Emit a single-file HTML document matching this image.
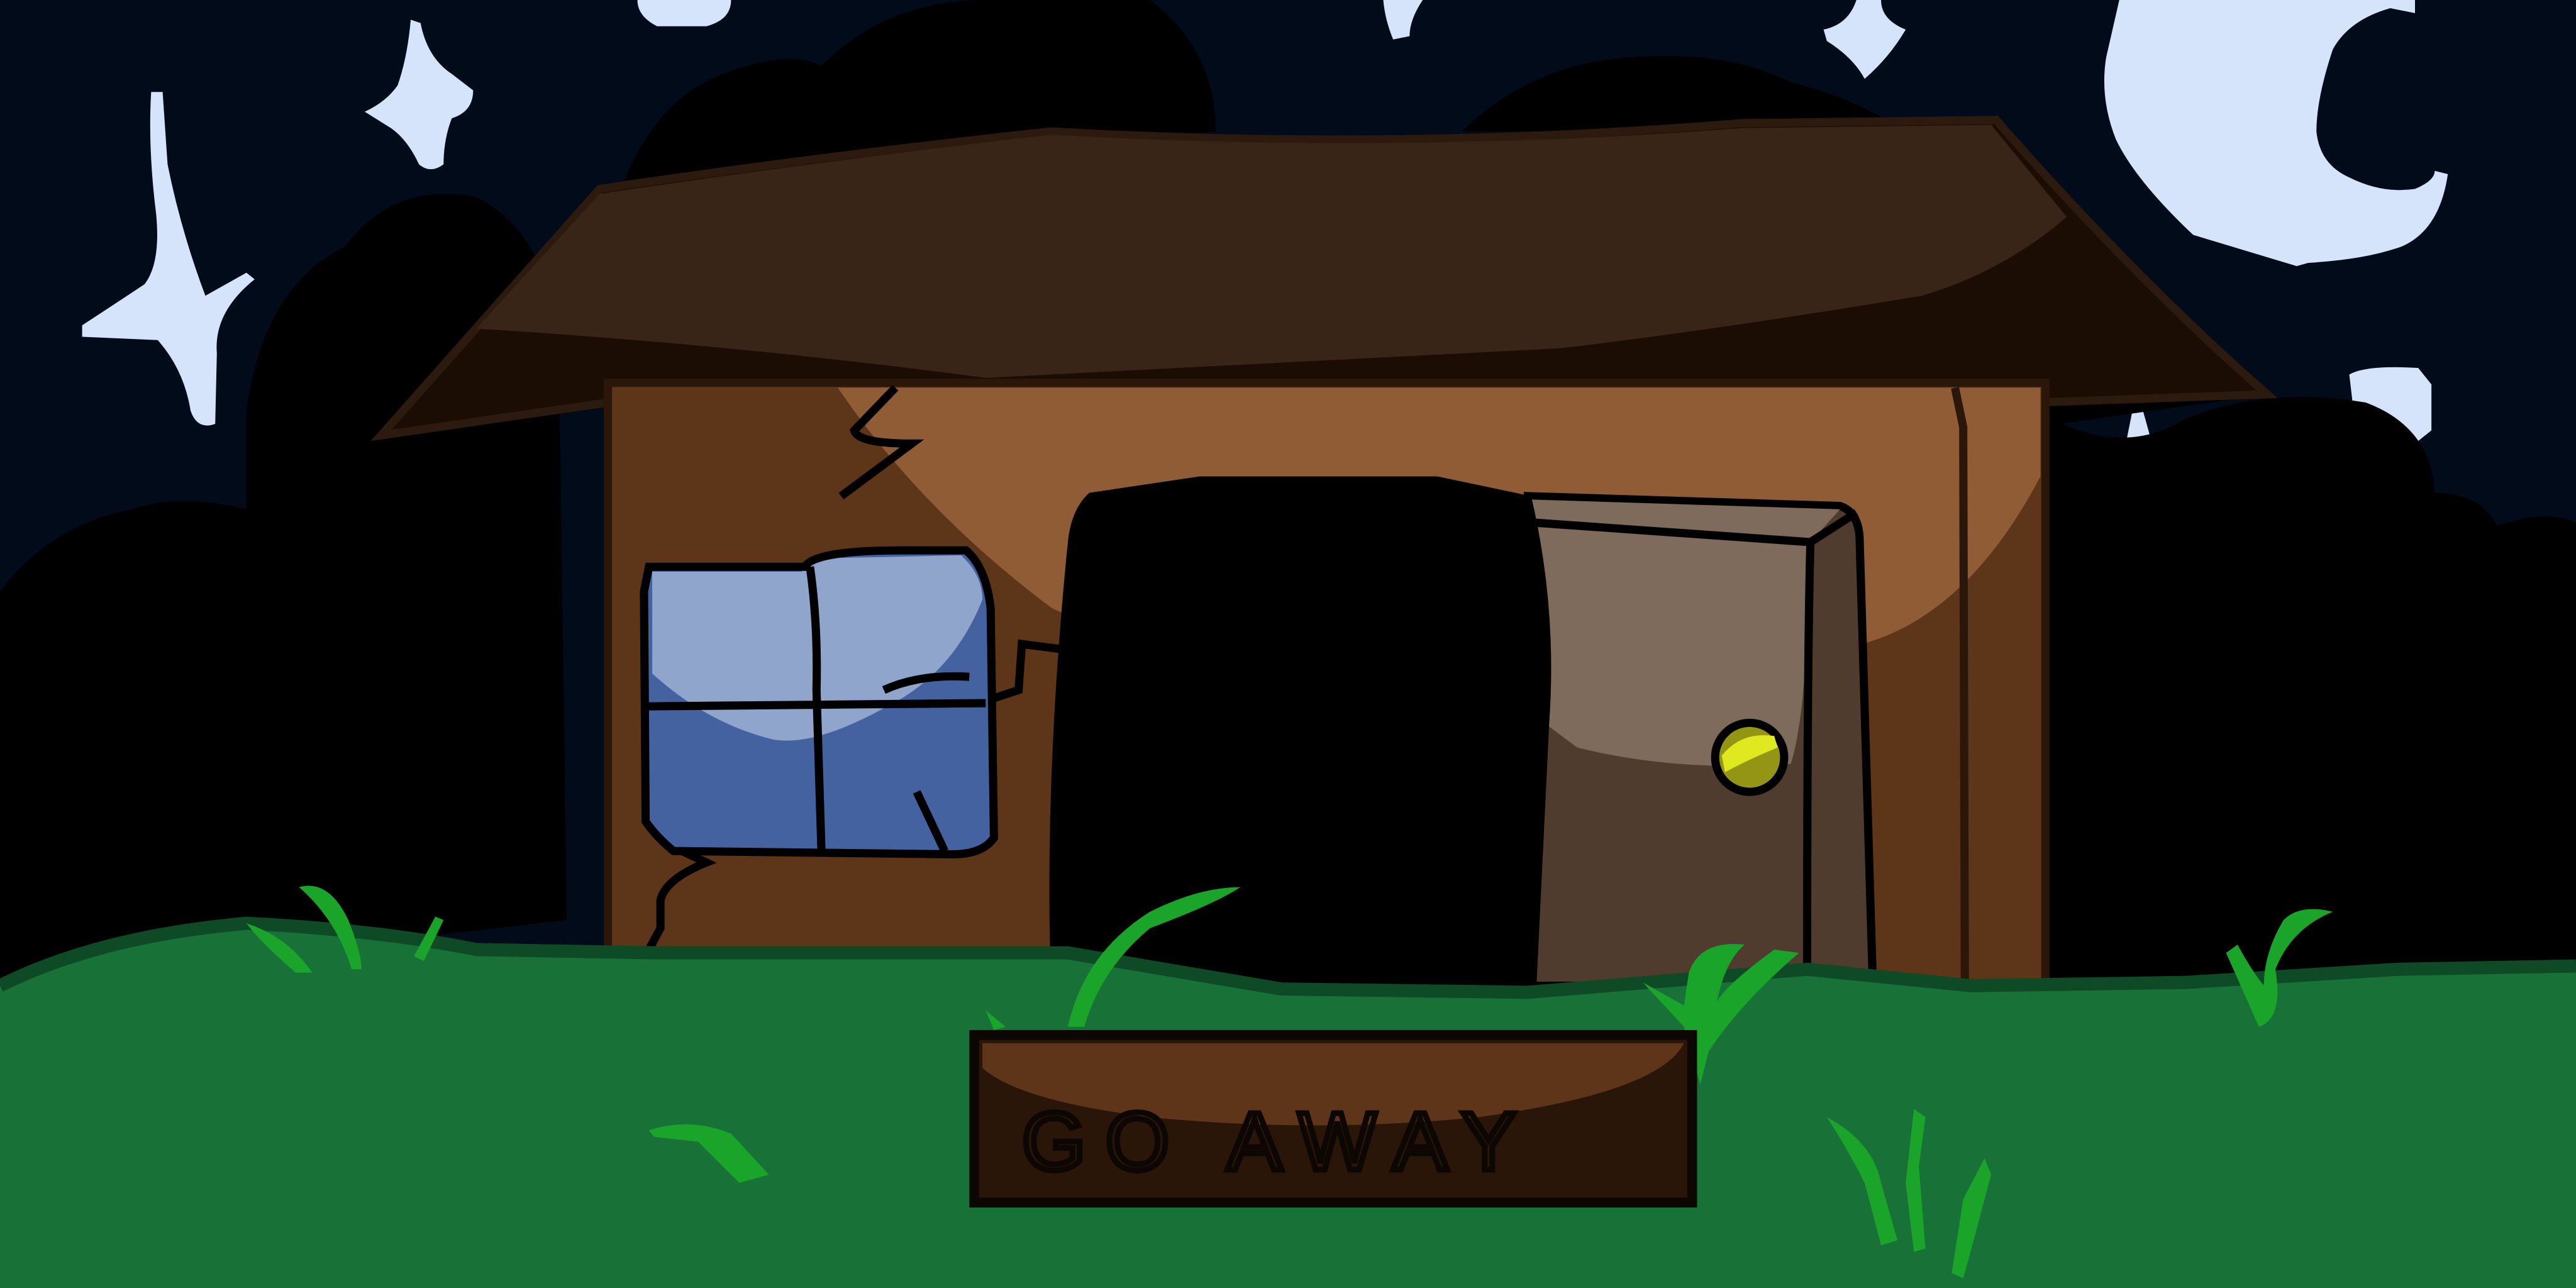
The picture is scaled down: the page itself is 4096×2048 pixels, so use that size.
<!DOCTYPE html>
<html><head><meta charset="utf-8"><style>
html,body{margin:0;padding:0;background:#010b19;overflow:hidden}
svg{display:block}
</style></head><body>
<svg width="4096" height="2048" viewBox="0 0 1568 784" xmlns="http://www.w3.org/2000/svg">
<rect width="1568" height="784" fill="#010b19"/>
<g fill="#d5e3fb">
<path d="M92 56 L99 56 L102 100 Q110 140 125 180 L150 166 L155 170 Q130 190 132 215 L131 258 Q120 262 116 250 Q112 225 96 207 L50 205 L50 198 Q70 185 88 173 Q98 160 95 130 Q90 90 92 56Z"/>
<path d="M250 12 L256 14 Q260 35 275 45 L288 55 Q288 68 275 72 Q270 85 270 100 Q262 106 255 100 Q248 85 238 78 L222 68 Q235 62 242 52 Q248 35 250 12Z"/>
<path d="M1130 0 L1145 0 Q1145 12 1160 18 Q1150 35 1135 48 Q1128 35 1112 25 L1110 18 Q1125 15 1130 0Z"/>
<path d="M842 0 L866 0 Q858 12 858 22 L848 24 Q843 12 842 0Z"/>
<path d="M388 0 L445 0 Q445 12 430 16 L400 16 Q388 10 388 0Z"/>
<path d="M1290 0 L1470 0 L1470 8 L1455 5 Q1430 12 1420 30 Q1410 60 1410 80 Q1412 100 1430 108 Q1450 118 1470 115 Q1482 110 1482 104 L1490 106 Q1485 140 1462 150 Q1440 158 1405 160 L1398 162 L1335 143 Q1300 110 1288 85 Q1278 60 1282 35 Z"/>
<path d="M1430 228 Q1440 222 1472 224 L1480 234 L1480 262 L1470 270 Q1455 255 1432 245 Z"/>
<path d="M1298 250 L1303 245 L1310 270 L1298 285 L1292 280 Z"/>
</g>
<g fill="#000000">
<path d="M0 360 Q30 320 80 310 Q110 300 150 310 L150 250 Q160 175 210 150 Q240 110 290 120 Q330 140 340 200 L345 560 L0 600 Z"/>
<path d="M380 110 Q400 60 440 45 Q480 30 500 40 Q540 0 600 0 L700 0 Q740 30 740 80 L380 110Z"/>
<path d="M890 80 Q930 40 990 35 Q1050 30 1090 50 Q1130 60 1160 80 Z"/>
<path d="M1240 250 Q1290 280 1330 255 Q1380 235 1440 245 Q1480 260 1482 300 Q1510 300 1520 320 Q1550 310 1568 318 L1568 600 L1240 600 Z"/>
<path d="M1240 200 Q1300 150 1380 240 L1240 260 Z"/>
</g>
<path d="M232 265 L365 115 Q500 95 640 80 Q850 92 1060 75 L1215 73 Q1300 170 1380 240 L1240 245 L370 245 Z" fill="#1c0d04" stroke="#2b1a0d" stroke-width="5"/>
<path d="M290 200 L365 118 Q500 98 640 82 Q850 94 1060 78 L1212 76 L1258 132 Q1220 165 1170 180 Q1050 200 950 212 L600 230 Q450 210 290 200Z" fill="#382518"/>
<rect x="370" y="233" width="875" height="370" fill="#5d3519" stroke="#2b170a" stroke-width="5"/>
<path d="M510 236 L1242 236 L1242 290 Q1200 370 1140 390 Q1050 420 900 400 Q700 400 640 370 Q560 310 510 236Z" fill="#8f5c36"/>
<path d="M1190 236 L1195 260 L1196 600" stroke="#2b170a" stroke-width="5" fill="none"/>
<path d="M545 236 L520 262 Q522 270 555 270 L512 302" stroke="#000" stroke-width="5" fill="none"/>
<path d="M395 345 L490 345 Q495 335 550 335 L588 335 Q600 345 603 370 L605 510 Q598 520 580 520 L410 518 Q400 510 393 500 L392 360 Z" fill="#4462a0"/>
<path d="M397 348 L488 348 L495 340 L585 338 Q598 350 598 365 Q580 410 540 430 Q495 455 470 450 Q430 440 397 410 Z" fill="#8fa5cc"/>
<path d="M395 345 L490 345 Q495 335 550 335 L588 335 Q600 345 603 370 L605 510 Q598 520 580 520 L410 518 Q400 510 393 500 L392 360 Z M390 430 L600 428 M493 345 Q498 380 497 420 L500 518 M605 425 L620 420 L622 392 L645 395 M538 420 Q560 410 590 412 M558 482 L575 518" stroke="#000" stroke-width="5" fill="none"/>
<path d="M415 518 L430 525 Q405 535 402 548 L402 565 L395 578" stroke="#000" stroke-width="5" fill="none"/>
<path d="M930 302 L1120 308 Q1132 312 1132 330 L1140 600 L930 600 Z" fill="#4f3c2f" stroke="#000" stroke-width="5"/>
<path d="M930 304 L1120 310 L1102 330 L1100 380 Q1098 440 1090 465 Q1020 470 960 455 L940 440 Z" fill="#7e6b5b"/>
<path d="M932 318 L1102 330 L1130 312 M1102 330 Q1100 400 1100 590" stroke="#000" stroke-width="5" fill="none"/>
<circle cx="1065" cy="461" r="21" fill="#949415" stroke="#000" stroke-width="5"/>
<path d="M1048 460 Q1060 445 1080 448 L1082 455 Q1065 462 1050 470Z" fill="#e0e820"/>
<path d="M663 300 L730 290 L875 290 L932 302 Q948 370 943 440 L935 605 L640 605 Q635 480 650 330 Q652 310 663 300Z" fill="#000"/>
<path d="M0 600 Q60 570 150 562 Q230 566 290 578 L400 580 L650 580 L780 602 L930 604 L1100 590 L1200 600 L1330 598 L1460 590 L1568 588 L1568 784 L0 784Z" fill="#187238"/>
<path d="M0 600 Q60 570 150 562 Q230 566 290 578 L400 580 L650 580 L780 602 L930 604 L1100 590 L1200 600 L1330 598 L1460 590 L1568 588" fill="none" stroke="#0d4a25" stroke-width="8"/>
<g fill="#1aa52a">
<path d="M150 562 Q175 570 190 592 L180 592 Q160 575 150 562Z"/>
<path d="M182 540 Q200 535 212 560 Q220 580 220 590 L214 590 Q205 560 182 540Z"/>
<path d="M270 560 L258 585 L252 582 L265 558Z"/>
<path d="M650 625 Q660 580 700 555 Q730 540 755 540 Q740 550 700 565 Q670 590 660 625Z"/>
<path d="M600 615 L612 625 L605 627Z"/>
<path d="M1000 598 L1025 625 L1035 660 L1040 640 Q1060 610 1095 580 L1080 578 Q1050 600 1045 610 Q1050 585 1062 575 Q1035 572 1028 592 L1025 612Z"/>
<path d="M1355 580 L1375 625 Q1390 620 1385 590 Q1395 565 1420 555 Q1400 550 1390 560 Q1378 580 1378 600 Q1370 590 1362 575Z"/>
<path d="M395 688 Q420 680 445 690 L468 715 L450 720 Q435 705 425 695 L398 692Z"/>
<path d="M1112 680 Q1140 695 1145 720 L1155 755 L1145 758 L1135 720 Q1125 700 1112 680Z"/>
<path d="M1165 675 L1172 680 L1168 710 L1172 760 L1165 762 L1160 720Z"/>
<path d="M1208 705 L1212 715 L1200 760 L1195 778 L1188 775 L1195 730Z"/>
</g>
<rect x="593" y="630" width="437" height="102" fill="#2a1509" stroke="#0d0703" stroke-width="6"/>
<path d="M598 635 L1025 635 Q1010 665 900 680 Q800 690 700 680 Q620 670 598 650Z" fill="#5e3519"/>
<text x="622" y="712" font-family="Liberation Sans, sans-serif" font-size="50" fill="none" stroke="#0d0703" stroke-width="3.5" letter-spacing="12">GO AWAY</text>
</svg>
</body></html>
